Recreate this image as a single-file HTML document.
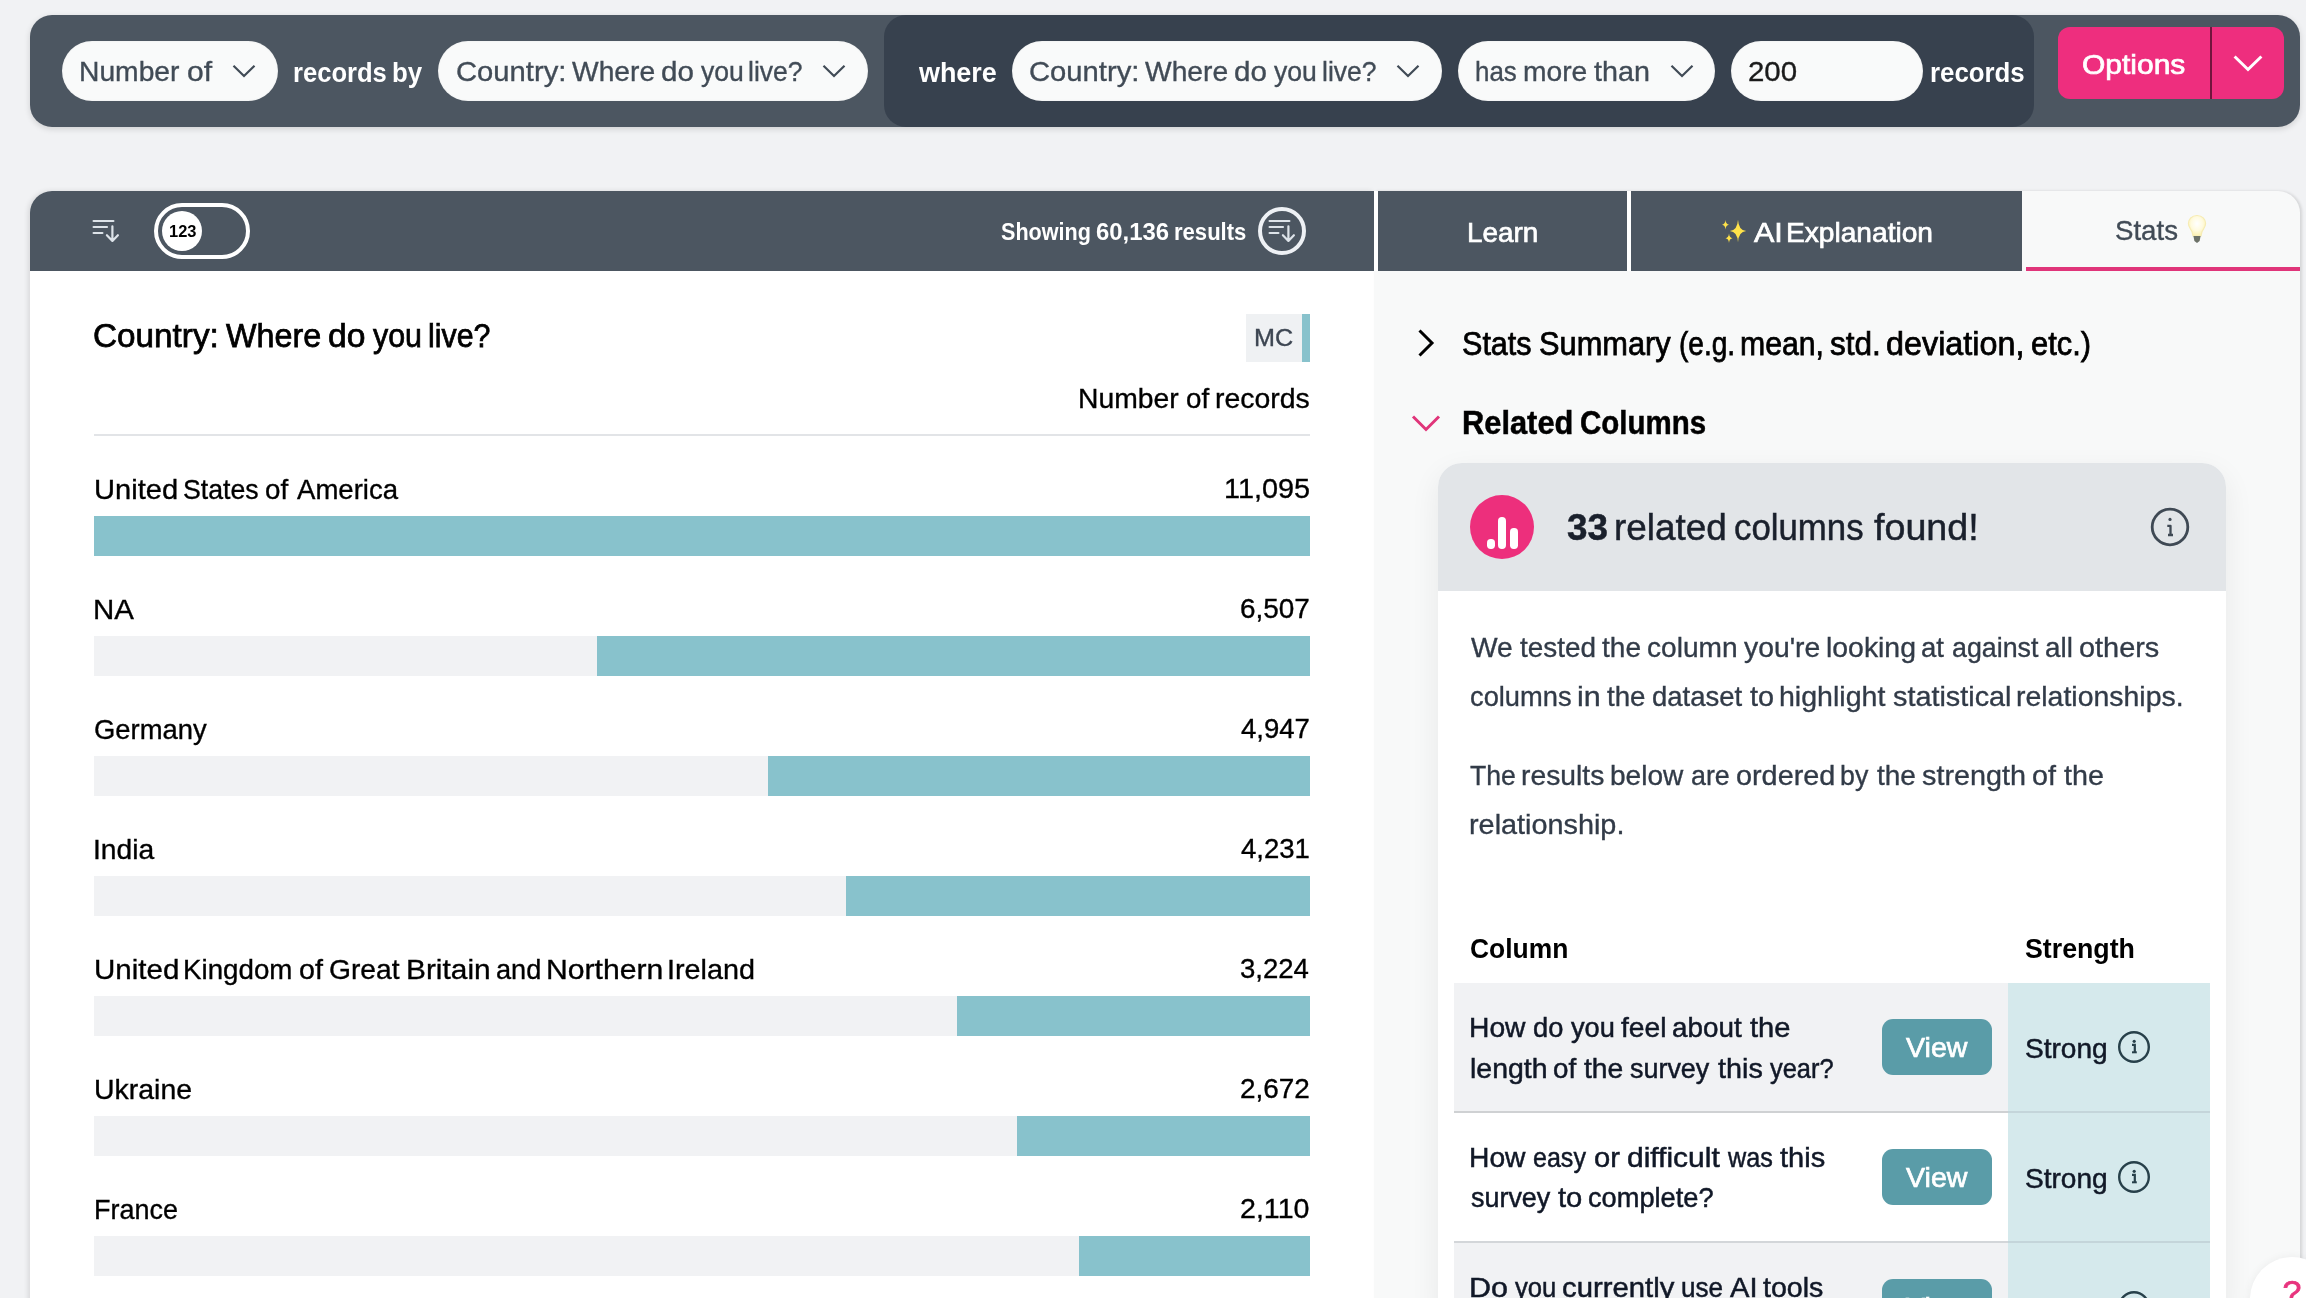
<!DOCTYPE html>
<html lang="en">
<head>
<meta charset="utf-8">
<title>Country: Where do you live?</title>
<style>
html,body{margin:0;padding:0;}
body{width:2306px;height:1298px;overflow:hidden;background:#f1f2f4;font-family:"Liberation Sans",sans-serif;}
#page{will-change:transform;position:relative;width:2306px;height:1298px;overflow:hidden;}
#page div,#page span,#page svg,#page button{position:absolute;box-sizing:border-box;}
.t{white-space:pre;line-height:1;transform-origin:0 0;-webkit-text-stroke:0.35px currentColor;}
.ws{-webkit-text-stroke:0.45px #fff;}
.ws2{-webkit-text-stroke:0.7px #fff;}
.b{-webkit-text-stroke:0;}
.sk50{-webkit-text-stroke:0.5px currentColor;}
.sk75{-webkit-text-stroke:0.75px currentColor;}
.pill{background:#f9fafa;border-radius:30px;height:60px;top:41px;box-shadow:inset 0 0 2px rgba(0,0,0,.08);}
.dark{background:#4c5661;}
.track{left:94px;width:1216px;height:40px;background:#f1f2f4;}
.fill{right:0;top:0;height:40px;background:#88c2cc;}
.view{left:1882px;width:110px;height:56px;border-radius:11px;background:#5a9ca8;border:0;padding:0;}

</style>
</head>
<body>
<div id="page">
<!-- top query bar -->
<div class="dark" style="left:30px;top:15px;width:2270px;height:112px;border-radius:22px;box-shadow:0 2px 6px rgba(0,0,0,.14);"></div>
<div style="left:884px;top:15px;width:1150px;height:112px;border-radius:22px;background:#37414e;"></div>
<div class="pill" style="left:62px;width:216px;"></div>
<div class="pill" style="left:438px;width:430px;"></div>
<div class="pill" style="left:1012px;width:430px;"></div>
<div class="pill" style="left:1458px;width:257px;"></div>
<div class="pill" style="left:1731px;width:192px;"></div>
<svg style="left:231px;top:63px" width="26" height="16" viewBox="0 0 26 16"><path d="M2.5 2.8 L13 13 L23.5 2.8" fill="none" stroke="#414b56" stroke-width="2.2"/></svg>
<svg style="left:821px;top:63px" width="26" height="16" viewBox="0 0 26 16"><path d="M2.5 2.8 L13 13 L23.5 2.8" fill="none" stroke="#414b56" stroke-width="2.2"/></svg>
<svg style="left:1395px;top:63px" width="26" height="16" viewBox="0 0 26 16"><path d="M2.5 2.8 L13 13 L23.5 2.8" fill="none" stroke="#414b56" stroke-width="2.2"/></svg>
<svg style="left:1668.5px;top:63px" width="26" height="16" viewBox="0 0 26 16"><path d="M2.5 2.8 L13 13 L23.5 2.8" fill="none" stroke="#414b56" stroke-width="2.2"/></svg>
<!-- options button -->
<div style="left:2058px;top:27px;width:226px;height:72px;border-radius:12px;background:#ee2e7e;"></div>
<div style="left:2209.8px;top:27px;width:2.2px;height:72px;background:#72143d;"></div>
<svg style="left:2232px;top:53px" width="32" height="20" viewBox="0 0 32 20"><path d="M2.6 3.5 L16 16.5 L29.4 3.5" fill="none" stroke="#fff" stroke-width="3"/></svg>

<!-- panels -->
<div style="left:30px;top:191px;width:1344px;height:1120px;background:#fff;border-radius:22px 0 0 0;box-shadow:-2px 0 5px rgba(0,0,0,.10);"></div>
<div style="left:1374px;top:191px;width:926px;height:1120px;background:#f8f9f9;border-radius:0 22px 0 0;box-shadow:2px 0 3px rgba(0,0,0,.12);"></div>
<div style="left:1374px;top:191px;width:648px;height:80px;background:#fff;"></div>
<div class="dark" style="left:30px;top:191px;width:1344px;height:80px;border-radius:22px 0 0 0;"></div>
<div class="dark" style="left:1378px;top:191px;width:249px;height:80px;"></div>
<div class="dark" style="left:1631px;top:191px;width:391px;height:80px;"></div>
<div style="left:2026px;top:267px;width:274px;height:4px;background:#e0357a;"></div>

<!-- sort icon -->
<svg style="left:80px;top:210px" width="48" height="40" viewBox="0 0 48 40"><g fill="none" stroke="#dde3e9" stroke-width="2.2" stroke-linecap="round" stroke-linejoin="round"><path d="M13.6 11 H33.4 M13.6 17 H27 M13.6 23 H22.4"/><path d="M32.4 16.3 V30.6 M26.9 25.2 L32.4 30.9 L37.9 25.2"/></g></svg>
<!-- toggle -->
<div style="left:154px;top:203px;width:96px;height:56px;border-radius:28px;border:4px solid #fff;"></div>
<div style="left:162px;top:211px;width:40px;height:40px;border-radius:20px;background:#fff;"></div>
<!-- circle sort icon -->
<svg style="left:1258px;top:207px" width="48" height="48" viewBox="0 0 48 48"><circle cx="24" cy="24" r="22" fill="none" stroke="#eef1f5" stroke-width="4"/></svg>
<svg style="left:1255.9px;top:210.2px" width="48" height="40" viewBox="0 0 48 40"><g fill="none" stroke="#dde3e9" stroke-width="2.2" stroke-linecap="round" stroke-linejoin="round"><path d="M13.6 11 H33.4 M13.6 17 H27 M13.6 23 H22.4"/><path d="M32.4 16.3 V30.6 M26.9 25.2 L32.4 30.9 L37.9 25.2"/></g></svg>
<!-- sparkle + bulb -->
<svg style="left:1718px;top:216px" width="32" height="32" viewBox="0 0 32 32"><g fill="#ffe24a"><path d="M20 3.7 Q20.6 14.4 28.2 15 Q20.6 15.6 20 26.3 Q19.4 15.6 11.8 15 Q19.4 14.4 20 3.7 Z"/><path d="M7.5 4 Q7.9 8.4 11 8.7 Q7.9 9 7.5 13.4 Q7.1 9 4 8.7 Q7.1 8.4 7.5 4 Z"/><path d="M11 17.5 Q11.4 21.9 14.5 22.2 Q11.4 22.5 11 26.9 Q10.6 22.5 7.5 22.2 Q10.6 21.9 11 17.5 Z"/></g></svg>
<svg style="left:2182px;top:210px" width="30" height="38" viewBox="0 0 30 38"><defs><radialGradient id="bg" cx="50%" cy="40%" r="60%"><stop offset="0" stop-color="#ffffff"/><stop offset="0.55" stop-color="#fffbe0"/><stop offset="1" stop-color="#fbf0b0"/></radialGradient><filter id="bl" x="-30%" y="-30%" width="160%" height="160%"><feGaussianBlur stdDeviation="0.7"/></filter></defs><g filter="url(#bl)"><path d="M15 5.5 C9.8 5.5 6.4 9.3 6.4 13.6 C6.4 17 8.6 19 10 21.6 L11 26 H19 L20 21.6 C21.4 19 23.6 17 23.6 13.6 C23.6 9.3 20.2 5.500 15 5.5 Z" fill="url(#bg)" stroke="#f6ecb4" stroke-width="1.2"/><path d="M11.4 26 H18.6 L17.6 31 L15 33 L12.4 31 Z" fill="#6c7268"/></g></svg>

<!-- left panel content -->
<div style="left:1246px;top:314px;width:64px;height:48px;background:#eff1f3;"></div>
<div style="left:1302px;top:314px;width:8px;height:48px;background:#88c2cc;"></div>
<div style="left:94px;top:434px;width:1216px;height:2px;background:#e2e4e7;"></div>
<div class="track" style="top:516px;"><div class="fill" style="width:1216px;"></div></div>
<div class="track" style="top:636px;"><div class="fill" style="width:713px;"></div></div>
<div class="track" style="top:756px;"><div class="fill" style="width:542px;"></div></div>
<div class="track" style="top:876px;"><div class="fill" style="width:464px;"></div></div>
<div class="track" style="top:996px;"><div class="fill" style="width:353px;"></div></div>
<div class="track" style="top:1116px;"><div class="fill" style="width:293px;"></div></div>
<div class="track" style="top:1236px;"><div class="fill" style="width:231px;"></div></div>

<!-- right panel content -->
<svg style="left:1414px;top:326px" width="24" height="34" viewBox="0 0 24 34"><path d="M5.5 4.5 L18 17 L5.5 29.5" fill="none" stroke="#000" stroke-width="3"/></svg>
<svg style="left:1409px;top:412px" width="34" height="22" viewBox="0 0 34 22"><path d="M4 4.5 L17 17.5 L30 4.5" fill="none" stroke="#e0357a" stroke-width="3"/></svg>
<div style="left:1438px;top:463px;width:787.5px;height:860px;border-radius:24px;background:#fff;box-shadow:0 10px 30px rgba(0,0,0,.07);overflow:hidden;">
  <div style="left:0;top:0;width:788px;height:128px;background:#e2e5e8;"></div>
</div>
<div style="left:1470px;top:495px;width:64px;height:64px;border-radius:32px;background:#ed2f7c;"></div>
<div style="left:1487px;top:539px;width:7.5px;height:10px;border-radius:3.7px;background:#fff;"></div>
<div style="left:1498.2px;top:516.5px;width:7.8px;height:32.5px;border-radius:3.9px;background:#fff;"></div>
<div style="left:1510px;top:527.5px;width:7.5px;height:21.5px;border-radius:3.7px;background:#fff;"></div>
<svg style="left:2150px;top:507px" width="40" height="40" viewBox="0 0 40 40"><circle cx="20" cy="20" r="17.8" fill="none" stroke="#3f4954" stroke-width="2.8"/><circle cx="20" cy="12.4" r="1.6" fill="#3f4954"/><path d="M17.3 18.8 H20.5 V27.4 M18 28 H23" fill="none" stroke="#3f4954" stroke-width="2.3" stroke-linejoin="round"/></svg>

<!-- table -->
<div style="left:1454px;top:983px;width:554px;height:130px;background:#f1f2f4;border-bottom:2px solid #cfd1d3;"></div>
<div style="left:1454px;top:1113px;width:554px;height:130px;background:#fff;border-bottom:2px solid #d3d6d9;"></div>
<div style="left:1454px;top:1243px;width:554px;height:130px;background:#f1f2f4;"></div>
<div style="left:2008px;top:983px;width:202px;height:130px;background:#d5e9ec;border-bottom:2px solid #c4d5da;"></div>
<div style="left:2008px;top:1113px;width:202px;height:130px;background:#d5e9ec;border-bottom:2px solid #c4d5da;"></div>
<div style="left:2008px;top:1243px;width:202px;height:130px;background:#d5e9ec;"></div>
<button class="view" style="top:1018.75px;"></button>
<button class="view" style="top:1148.75px;"></button>
<button class="view" style="top:1278.75px;"></button>
<svg style="left:2117px;top:1030px" width="34" height="34" viewBox="0 0 34 34"><circle cx="17" cy="17" r="14.8" fill="none" stroke="#27404a" stroke-width="2.4"/><circle cx="17.2" cy="11.3" r="1.6" fill="#27404a"/><path d="M15 14.8 H17.8 V22" fill="none" stroke="#27404a" stroke-width="2.2"/><path d="M15 22.3 H19.8" fill="none" stroke="#27404a" stroke-width="2"/></svg>
<svg style="left:2117px;top:1160px" width="34" height="34" viewBox="0 0 34 34"><circle cx="17" cy="17" r="14.8" fill="none" stroke="#27404a" stroke-width="2.4"/><circle cx="17.2" cy="11.3" r="1.6" fill="#27404a"/><path d="M15 14.8 H17.8 V22" fill="none" stroke="#27404a" stroke-width="2.2"/><path d="M15 22.3 H19.8" fill="none" stroke="#27404a" stroke-width="2"/></svg>
<svg style="left:2117px;top:1290px" width="34" height="34" viewBox="0 0 34 34"><circle cx="17" cy="17" r="14.8" fill="none" stroke="#27404a" stroke-width="2.4"/><circle cx="17.2" cy="11.3" r="1.6" fill="#27404a"/><path d="M15 14.8 H17.8 V22" fill="none" stroke="#27404a" stroke-width="2.2"/><path d="M15 22.3 H19.8" fill="none" stroke="#27404a" stroke-width="2"/></svg>
<!-- help bubble -->
<div style="left:2250px;top:1257px;width:84px;height:84px;border-radius:42px;background:#fff;box-shadow:0 0 10px rgba(0,0,0,.06);"></div>

<span class="t" style="left:79.04px;top:58.29px;font-size:28px;color:#414b56;transform:scaleX(1.0089)">Number </span>
<span class="t" style="left:186.56px;top:58.29px;font-size:28px;color:#414b56;transform:scaleX(1.0743)">of</span>
<span class="t b" style="left:292.90px;top:58.79px;font-size:28px;font-weight:700;color:#fff;transform:scaleX(0.9128)">records </span>
<span class="t b" style="left:392.13px;top:58.79px;font-size:28px;font-weight:700;color:#fff;transform:scaleX(0.9243)">by</span>
<span class="t" style="left:455.63px;top:58.29px;font-size:28px;color:#414b56;transform:scaleX(1.0432)">Country: </span>
<span class="t" style="left:571.50px;top:58.29px;font-size:28px;color:#414b56;transform:scaleX(1.0079)">Where </span>
<span class="t" style="left:660.68px;top:58.29px;font-size:28px;color:#414b56;transform:scaleX(1.0565)">do </span>
<span class="t" style="left:700.50px;top:58.29px;font-size:28px;color:#414b56;transform:scaleX(0.9497)">you </span>
<span class="t" style="left:748.34px;top:58.29px;font-size:28px;color:#414b56;transform:scaleX(0.9485)">live?</span>
<span class="t b" style="left:918.92px;top:58.79px;font-size:28px;font-weight:700;color:#fff;transform:scaleX(0.9608)">where</span>
<span class="t" style="left:1029.33px;top:58.29px;font-size:28px;color:#414b56;transform:scaleX(1.0432)">Country: </span>
<span class="t" style="left:1145.20px;top:58.29px;font-size:28px;color:#414b56;transform:scaleX(1.0079)">Where </span>
<span class="t" style="left:1234.38px;top:58.29px;font-size:28px;color:#414b56;transform:scaleX(1.0565)">do </span>
<span class="t" style="left:1274.20px;top:58.29px;font-size:28px;color:#414b56;transform:scaleX(0.9497)">you </span>
<span class="t" style="left:1322.04px;top:58.29px;font-size:28px;color:#414b56;transform:scaleX(0.9485)">live?</span>
<span class="t" style="left:1475.38px;top:58.29px;font-size:28px;color:#414b56;transform:scaleX(0.9262)">has </span>
<span class="t" style="left:1522.74px;top:58.29px;font-size:28px;color:#414b56;transform:scaleX(1.0077)">more </span>
<span class="t" style="left:1594.00px;top:58.29px;font-size:28px;color:#414b56;transform:scaleX(1.0251)">than</span>
<span class="t" style="left:1748.37px;top:58.29px;font-size:28px;color:#1b1b1b;transform:scaleX(1.0513)">200</span>
<span class="t b" style="left:1930.14px;top:58.79px;font-size:28px;font-weight:700;color:#fff;transform:scaleX(0.9215)">records</span>
<span class="t ws2" style="left:2082.09px;top:50.54px;font-size:28px;color:#fff;transform:scaleX(1.0710)">Options</span>
<span class="t b" style="left:168.97px;top:223.11px;font-size:17px;font-weight:700;color:#000;transform:scaleX(0.9673)">123</span>
<span class="t b" style="left:1001.06px;top:220.18px;font-size:24px;font-weight:700;color:#fff;transform:scaleX(0.8997)">Showing </span>
<span class="t b" style="left:1095.85px;top:220.18px;font-size:24px;font-weight:700;color:#fff;transform:scaleX(0.9956)">60,136 </span>
<span class="t b" style="left:1173.92px;top:220.18px;font-size:24px;font-weight:700;color:#fff;transform:scaleX(0.9196)">results</span>
<span class="t ws2" style="left:1466.82px;top:218.79px;font-size:28px;color:#fff;transform:scaleX(0.9948)">Learn</span>
<span class="t ws2" style="left:1754.25px;top:218.79px;font-size:28px;color:#fff;transform:scaleX(1.0879)">AI </span>
<span class="t ws2" style="left:1786.20px;top:218.79px;font-size:28px;color:#fff;transform:scaleX(1.0044)">Explanation</span>
<span class="t" style="left:2114.64px;top:216.79px;font-size:28px;color:#414b56;transform:scaleX(0.9870)">Stats</span>
<span class="t sk75" style="left:93.44px;top:318.84px;font-size:33.5px;color:#000;transform:scaleX(0.9935)">Country: </span>
<span class="t sk75" style="left:225.50px;top:318.84px;font-size:33.5px;color:#000;transform:scaleX(0.9652)">Where </span>
<span class="t sk75" style="left:327.65px;top:318.84px;font-size:33.5px;color:#000;transform:scaleX(1.0047)">do </span>
<span class="t sk75" style="left:373.00px;top:318.84px;font-size:33.5px;color:#000;transform:scaleX(0.9077)">you </span>
<span class="t sk75" style="left:427.71px;top:318.84px;font-size:33.5px;color:#000;transform:scaleX(0.9050)">live?</span>
<span class="t" style="left:1254.33px;top:325.98px;font-size:24px;color:#3d4652;transform:scaleX(1.0486)">MC</span>
<span class="t" style="left:1078.09px;top:385.09px;font-size:28px;color:#000;transform:scaleX(1.0105)">Number </span>
<span class="t" style="left:1185.83px;top:385.09px;font-size:28px;color:#000;transform:scaleX(0.9915)">of </span>
<span class="t" style="left:1215.42px;top:385.09px;font-size:28px;color:#000;transform:scaleX(1.0150)">records</span>
<span class="t" style="left:93.68px;top:475.79px;font-size:28px;color:#000;transform:scaleX(1.0388)">United </span>
<span class="t" style="left:183.42px;top:475.79px;font-size:28px;color:#000;transform:scaleX(0.9517)">States </span>
<span class="t" style="left:265.38px;top:475.79px;font-size:28px;color:#000;transform:scaleX(0.9915)">of </span>
<span class="t" style="left:296.75px;top:475.79px;font-size:28px;color:#000;transform:scaleX(0.9843)">America</span>
<span class="t" style="left:1223.70px;top:475.19px;font-size:28px;color:#000;transform:scaleX(1.0300)">11,095</span>
<span class="t" style="left:93.20px;top:595.79px;font-size:28px;color:#000;transform:scaleX(1.0517)">NA</span>
<span class="t" style="left:1239.89px;top:595.19px;font-size:28px;color:#000;transform:scaleX(0.9967)">6,507</span>
<span class="t" style="left:94.22px;top:715.79px;font-size:28px;color:#000;transform:scaleX(0.9786)">Germany</span>
<span class="t" style="left:1240.77px;top:715.19px;font-size:28px;color:#000;transform:scaleX(0.9840)">4,947</span>
<span class="t" style="left:93.49px;top:835.79px;font-size:28px;color:#000;transform:scaleX(1.0084)">India</span>
<span class="t" style="left:1240.77px;top:835.19px;font-size:28px;color:#000;transform:scaleX(0.9840)">4,231</span>
<span class="t" style="left:93.65px;top:955.79px;font-size:28px;color:#000;transform:scaleX(1.0549)">United </span>
<span class="t" style="left:183.33px;top:955.79px;font-size:28px;color:#000;transform:scaleX(0.9907)">Kingdom </span>
<span class="t" style="left:298.60px;top:955.79px;font-size:28px;color:#000;transform:scaleX(1.0247)">of </span>
<span class="t" style="left:329.43px;top:955.79px;font-size:28px;color:#000;transform:scaleX(1.0083)">Great </span>
<span class="t" style="left:405.92px;top:955.79px;font-size:28px;color:#000;transform:scaleX(1.0665)">Britain </span>
<span class="t" style="left:496.15px;top:955.79px;font-size:28px;color:#000;transform:scaleX(0.9709)">and </span>
<span class="t" style="left:545.74px;top:955.79px;font-size:28px;color:#000;transform:scaleX(1.0770)">Northern </span>
<span class="t" style="left:667.25px;top:955.79px;font-size:28px;color:#000;transform:scaleX(1.0274)">Ireland</span>
<span class="t" style="left:1240.34px;top:955.19px;font-size:28px;color:#000;transform:scaleX(0.9840)">3,224</span>
<span class="t" style="left:93.72px;top:1075.79px;font-size:28px;color:#000;transform:scaleX(1.0161)">Ukraine</span>
<span class="t" style="left:1239.89px;top:1075.19px;font-size:28px;color:#000;transform:scaleX(0.9967)">2,672</span>
<span class="t" style="left:93.59px;top:1195.79px;font-size:28px;color:#000;transform:scaleX(0.9639)">France</span>
<span class="t" style="left:1239.86px;top:1195.19px;font-size:28px;color:#000;transform:scaleX(1.0215)">2,110</span>
<span class="t sk75" style="left:1462.05px;top:326.64px;font-size:33.5px;color:#000;transform:scaleX(0.9121)">Stats </span>
<span class="t sk75" style="left:1539.04px;top:326.64px;font-size:33.5px;color:#000;transform:scaleX(0.9188)">Summary </span>
<span class="t sk75" style="left:1678.68px;top:326.64px;font-size:33.5px;color:#000;transform:scaleX(0.8380)">(e.g. </span>
<span class="t sk75" style="left:1739.71px;top:326.64px;font-size:33.5px;color:#000;transform:scaleX(0.9024)">mean, </span>
<span class="t sk75" style="left:1830.26px;top:326.64px;font-size:33.5px;color:#000;transform:scaleX(0.9410)">std. </span>
<span class="t sk75" style="left:1886.49px;top:326.64px;font-size:33.5px;color:#000;transform:scaleX(0.9651)">deviation, </span>
<span class="t sk75" style="left:2030.78px;top:326.64px;font-size:33.5px;color:#000;transform:scaleX(0.9219)">etc.)</span>
<span class="t b sk50" style="left:1461.82px;top:406.14px;font-size:33.5px;font-weight:700;color:#000;transform:scaleX(0.9203)">Related </span>
<span class="t b sk50" style="left:1579.58px;top:406.14px;font-size:33.5px;font-weight:700;color:#000;transform:scaleX(0.8800)">Columns</span>
<span class="t b sk50" style="left:1566.92px;top:508.83px;font-size:37.4px;font-weight:700;color:#1a202c;transform:scaleX(0.9854)">33</span>
<span class="t sk50" style="left:1613.94px;top:508.83px;font-size:37.4px;color:#1a202c;transform:scaleX(0.9862)">related </span>
<span class="t sk50" style="left:1734.41px;top:508.83px;font-size:37.4px;color:#1a202c;transform:scaleX(0.9305)">columns </span>
<span class="t sk50" style="left:1873.75px;top:508.83px;font-size:37.4px;color:#1a202c;transform:scaleX(1.0064)">found!</span>
<span class="t" style="left:1470.75px;top:634.29px;font-size:28px;color:#323b48;transform:scaleX(1.0067)">We </span>
<span class="t" style="left:1519.50px;top:634.29px;font-size:28px;color:#323b48;transform:scaleX(0.9957)">tested </span>
<span class="t" style="left:1602.00px;top:634.29px;font-size:28px;color:#323b48;transform:scaleX(1.0024)">the </span>
<span class="t" style="left:1647.12px;top:634.29px;font-size:28px;color:#323b48;transform:scaleX(1.0036)">column </span>
<span class="t" style="left:1744.25px;top:634.29px;font-size:28px;color:#323b48;transform:scaleX(1.0118)">you're </span>
<span class="t" style="left:1825.73px;top:634.29px;font-size:28px;color:#323b48;transform:scaleX(1.0137)">looking </span>
<span class="t" style="left:1921.34px;top:634.29px;font-size:28px;color:#323b48;transform:scaleX(0.9826)">at </span>
<span class="t" style="left:1951.66px;top:634.29px;font-size:28px;color:#323b48;transform:scaleX(0.9567)">against </span>
<span class="t" style="left:2045.38px;top:634.29px;font-size:28px;color:#323b48;transform:scaleX(0.9936)">all </span>
<span class="t" style="left:2078.60px;top:634.29px;font-size:28px;color:#323b48;transform:scaleX(1.0319)">others</span>
<span class="t" style="left:1469.90px;top:682.54px;font-size:28px;color:#323b48;transform:scaleX(0.9743)">columns </span>
<span class="t" style="left:1576.84px;top:682.54px;font-size:28px;color:#323b48;transform:scaleX(1.0898)">in </span>
<span class="t" style="left:1607.00px;top:682.54px;font-size:28px;color:#323b48;transform:scaleX(0.9892)">the </span>
<span class="t" style="left:1651.64px;top:682.54px;font-size:28px;color:#323b48;transform:scaleX(0.9815)">dataset </span>
<span class="t" style="left:1750.00px;top:682.54px;font-size:28px;color:#323b48;transform:scaleX(1.0299)">to </span>
<span class="t" style="left:1779.22px;top:682.54px;font-size:28px;color:#323b48;transform:scaleX(1.0193)">highlight </span>
<span class="t" style="left:1893.30px;top:682.54px;font-size:28px;color:#323b48;transform:scaleX(1.0290)">statistical </span>
<span class="t" style="left:2016.22px;top:682.54px;font-size:28px;color:#323b48;transform:scaleX(1.0159)">relationships.</span>
<span class="t" style="left:1470.33px;top:762.29px;font-size:28px;color:#323b48;transform:scaleX(0.9508)">The </span>
<span class="t" style="left:1521.48px;top:762.29px;font-size:28px;color:#323b48;transform:scaleX(1.0098)">results </span>
<span class="t" style="left:1610.25px;top:762.29px;font-size:28px;color:#323b48;transform:scaleX(1.0018)">below </span>
<span class="t" style="left:1691.16px;top:762.29px;font-size:28px;color:#323b48;transform:scaleX(0.9589)">are </span>
<span class="t" style="left:1736.10px;top:762.29px;font-size:28px;color:#323b48;transform:scaleX(1.0289)">ordered </span>
<span class="t" style="left:1840.23px;top:762.29px;font-size:28px;color:#323b48;transform:scaleX(0.9553)">by </span>
<span class="t" style="left:1876.60px;top:762.29px;font-size:28px;color:#323b48;transform:scaleX(0.9998)">the </span>
<span class="t" style="left:1922.05px;top:762.29px;font-size:28px;color:#323b48;transform:scaleX(1.0274)">strength </span>
<span class="t" style="left:2031.60px;top:762.29px;font-size:28px;color:#323b48;transform:scaleX(1.0247)">of </span>
<span class="t" style="left:2063.75px;top:762.29px;font-size:28px;color:#323b48;transform:scaleX(1.0254)">the</span>
<span class="t" style="left:1468.95px;top:810.54px;font-size:28px;color:#323b48;transform:scaleX(1.0293)">relationship.</span>
<span class="t b" style="left:1469.92px;top:934.79px;font-size:28px;font-weight:700;color:#000;transform:scaleX(0.9438)">Column</span>
<span class="t b" style="left:2024.58px;top:934.79px;font-size:28px;font-weight:700;color:#000;transform:scaleX(0.9553)">Strength</span>
<span class="t sk50" style="left:1469.29px;top:1014.29px;font-size:28px;color:#111827;transform:scaleX(1.0085)">How </span>
<span class="t sk50" style="left:1533.40px;top:1014.29px;font-size:28px;color:#111827;transform:scaleX(0.9741)">do </span>
<span class="t sk50" style="left:1570.75px;top:1014.29px;font-size:28px;color:#111827;transform:scaleX(0.9726)">you </span>
<span class="t sk50" style="left:1621.25px;top:1014.29px;font-size:28px;color:#111827;transform:scaleX(1.0076)">feel </span>
<span class="t sk50" style="left:1672.13px;top:1014.29px;font-size:28px;color:#111827;transform:scaleX(0.9941)">about </span>
<span class="t sk50" style="left:1750.00px;top:1014.29px;font-size:28px;color:#111827;transform:scaleX(1.0387)">the</span>
<span class="t sk50" style="left:1469.72px;top:1054.79px;font-size:28px;color:#111827;transform:scaleX(1.0159)">length </span>
<span class="t sk50" style="left:1552.88px;top:1054.79px;font-size:28px;color:#111827;transform:scaleX(0.9915)">of </span>
<span class="t sk50" style="left:1584.25px;top:1054.79px;font-size:28px;color:#111827;transform:scaleX(1.0090)">the </span>
<span class="t sk50" style="left:1630.08px;top:1054.79px;font-size:28px;color:#111827;transform:scaleX(0.9616)">survey </span>
<span class="t sk50" style="left:1717.50px;top:1054.79px;font-size:28px;color:#111827;transform:scaleX(1.0277)">this </span>
<span class="t sk50" style="left:1769.50px;top:1054.79px;font-size:28px;color:#111827;transform:scaleX(0.9085)">year?</span>
<span class="t sk50" style="left:1469.29px;top:1144.29px;font-size:28px;color:#111827;transform:scaleX(1.0085)">How </span>
<span class="t sk50" style="left:1533.47px;top:1144.29px;font-size:28px;color:#111827;transform:scaleX(0.8946)">easy </span>
<span class="t sk50" style="left:1593.59px;top:1144.29px;font-size:28px;color:#111827;transform:scaleX(1.0417)">or </span>
<span class="t sk50" style="left:1626.56px;top:1144.29px;font-size:28px;color:#111827;transform:scaleX(1.0701)">difficult </span>
<span class="t sk50" style="left:1727.89px;top:1144.29px;font-size:28px;color:#111827;transform:scaleX(0.8992)">was </span>
<span class="t sk50" style="left:1780.00px;top:1144.29px;font-size:28px;color:#111827;transform:scaleX(1.0364)">this</span>
<span class="t sk50" style="left:1470.58px;top:1184.29px;font-size:28px;color:#111827;transform:scaleX(0.9616)">survey </span>
<span class="t sk50" style="left:1558.00px;top:1184.29px;font-size:28px;color:#111827;transform:scaleX(1.0411)">to </span>
<span class="t sk50" style="left:1588.40px;top:1184.29px;font-size:28px;color:#111827;transform:scaleX(0.9717)">complete?</span>
<span class="t sk50" style="left:1469.12px;top:1274.29px;font-size:28px;color:#111827;transform:scaleX(1.0896)">Do </span>
<span class="t sk50" style="left:1515.00px;top:1274.29px;font-size:28px;color:#111827;transform:scaleX(0.9153)">you </span>
<span class="t sk50" style="left:1562.08px;top:1274.29px;font-size:28px;color:#111827;transform:scaleX(1.0459)">currently </span>
<span class="t sk50" style="left:1680.87px;top:1274.29px;font-size:28px;color:#111827;transform:scaleX(0.9319)">use </span>
<span class="t sk50" style="left:1730.00px;top:1274.29px;font-size:28px;color:#111827;transform:scaleX(1.0399)">AI </span>
<span class="t sk50" style="left:1763.00px;top:1274.29px;font-size:28px;color:#111827;transform:scaleX(1.0211)">tools</span>
<span class="t ws2" style="left:1906.25px;top:1034.39px;font-size:28px;color:#fff;transform:scaleX(1.0202)">View</span>
<span class="t sk50" style="left:2024.62px;top:1034.79px;font-size:28px;color:#111827;transform:scaleX(1.0025)">Strong</span>
<span class="t ws2" style="left:1906.25px;top:1164.39px;font-size:28px;color:#fff;transform:scaleX(1.0202)">View</span>
<span class="t sk50" style="left:2024.62px;top:1164.79px;font-size:28px;color:#111827;transform:scaleX(1.0025)">Strong</span>
<span class="t ws2" style="left:1906.25px;top:1294.39px;font-size:28px;color:#fff;transform:scaleX(1.0202)">View</span>
<span class="t sk50" style="left:2024.62px;top:1294.79px;font-size:28px;color:#111827;transform:scaleX(1.0025)">Strong</span>
<span class="t sk75" style="left:2282.44px;top:1275.21px;font-size:34px;color:#e8347e;transform:scaleX(1.0000)">?</span>
</div>
</body>
</html>
